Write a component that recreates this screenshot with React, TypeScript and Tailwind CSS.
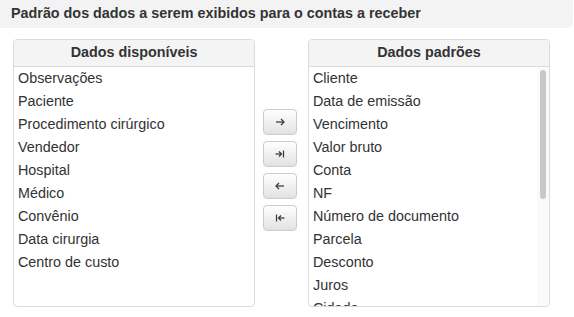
import React from "react";

const disponiveis = [
    "Observações",
    "Paciente",
    "Procedimento cirúrgico",
    "Vendedor",
    "Hospital",
    "Médico",
    "Convênio",
    "Data cirurgia",
    "Centro de custo",
];

const padroes = [
    "Cliente",
    "Data de emissão",
    "Vencimento",
    "Valor bruto",
    "Conta",
    "NF",
    "Número de documento",
    "Parcela",
    "Desconto",
    "Juros",
    "Cidade",
];

function Panel({ title, items, scroll }: { title: string; items: string[]; scroll?: boolean }) {
    return (
        <div className="w-[242px] h-[268px] border border-[#dcdcdc] rounded-[4px] flex flex-col overflow-hidden bg-white">
            <div className="h-[27px] shrink-0 bg-[#f4f4f4] border-b border-[#dcdcdc] flex items-center justify-center font-bold text-[14.35px] text-[#333]">
                {title}
            </div>
            <div className="relative flex-1 overflow-hidden">
                <ul className="pl-[4px]">
                    {items.map((item) => (
                        <li key={item} className="h-[23px] leading-[22px] text-[14.35px] text-[#333]">
                            {item}
                        </li>
                    ))}
                </ul>
                {scroll && (
                    <div className="absolute top-0 right-0 bottom-0 w-[12px] bg-[#fafafa]">
                        <div className="absolute top-[3px] left-[3px] w-[6px] h-[129px] rounded-full bg-[#c8c8c8]" />
                    </div>
                )}
            </div>
        </div>
    );
}

// small arrow glyphs drawn as svg, the unicode ones came out too tiny
function ArrowIcon({ kind }: { kind: "right" | "rightAll" | "left" | "leftAll" }) {
    const stroke = "#333";
    return (
        <svg width="10" height="8" viewBox="0 0 10 8" fill="none" stroke={stroke} strokeWidth="1.2">
            {kind === "right" && (
                <>
                    <path d="M1 4h8" />
                    <path d="M6 1l3 3-3 3" />
                </>
            )}
            {kind === "rightAll" && (
                <>
                    <path d="M0.5 4h6" />
                    <path d="M4 1.5l2.5 2.5L4 6.5" />
                    <path d="M8.5 0.5v7" />
                </>
            )}
            {kind === "left" && (
                <>
                    <path d="M1 4h8" />
                    <path d="M4 1L1 4l3 3" />
                </>
            )}
            {kind === "leftAll" && (
                <>
                    <path d="M1.5 0.5v7" />
                    <path d="M3.5 4h6" />
                    <path d="M6 1.5L3.5 4 6 6.5" />
                </>
            )}
        </svg>
    );
}

function ArrowButton({ kind }: { kind: "right" | "rightAll" | "left" | "leftAll" }) {
    return (
        <button className="w-[34px] h-[26px] border border-[#ccc] rounded-[4px] bg-gradient-to-b from-white to-[#e2e2e2] flex items-center justify-center">
            <ArrowIcon kind={kind} />
        </button>
    );
}

export default function App() {
    return (
        <div className="w-[574px] h-[317px] bg-white" style={{ fontFamily: '"Liberation Sans", Arial, sans-serif' }}>
            <div className="h-[28px] mr-[1px] bg-[#f3f3f3] rounded-br-[6px] flex items-center pl-[11px] font-bold text-[14.35px] text-[#333]">
                Padrão dos dados a serem exibidos para o contas a receber
            </div>
            <div className="flex pl-[13px] pt-[11px]">
                <Panel title="Dados disponíveis" items={disponiveis} />
                <div className="ml-[8px] mr-[11px] pt-[70px] flex flex-col gap-[6px]">
                    <ArrowButton kind="right" />
                    <ArrowButton kind="rightAll" />
                    <ArrowButton kind="left" />
                    <ArrowButton kind="leftAll" />
                </div>
                <Panel title="Dados padrões" items={padroes} scroll />
            </div>
        </div>
    );
}
